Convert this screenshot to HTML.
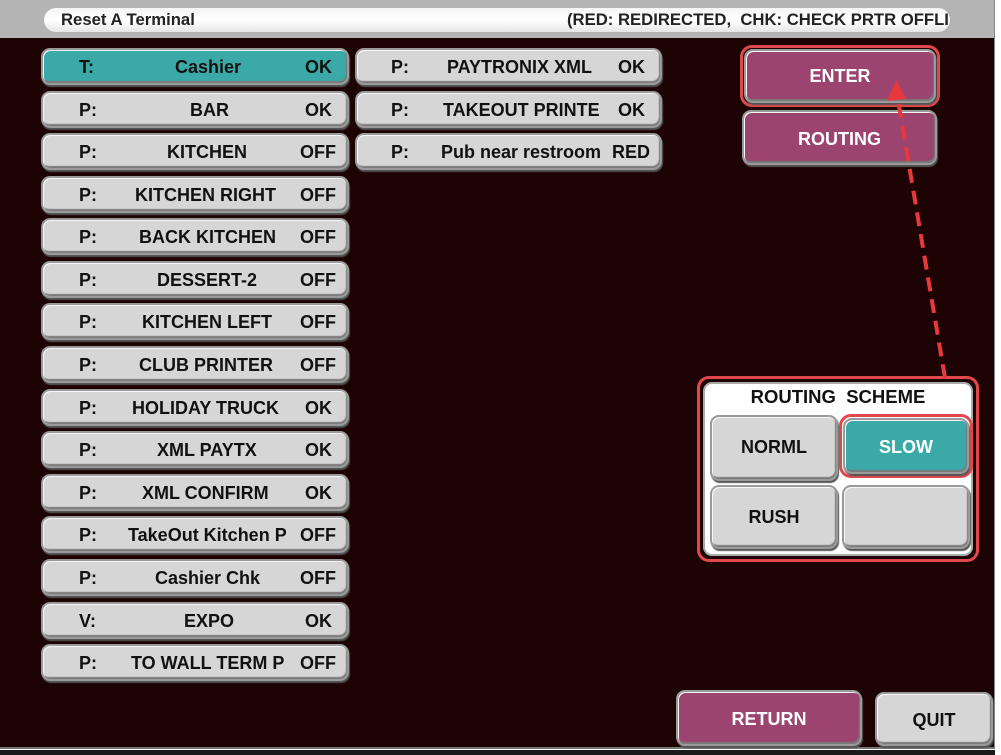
<!DOCTYPE html>
<html><head><meta charset="utf-8"><style>
*{margin:0;padding:0;box-sizing:border-box}
body{width:1001px;height:755px;background:#fff;position:relative;overflow:hidden;font-family:"Liberation Sans",Arial,sans-serif;font-weight:bold}
#main{position:absolute;left:0;top:0;width:995px;height:749px;background:#1e0304;border-right:1px solid #888;border-bottom:2px solid #777}
#bot{position:absolute;left:0;top:750px;width:995px;height:5px;background:#1a1a1a}
#top{position:absolute;left:0;top:0;width:994px;height:38px;background:#b4b4b4}
#pill{position:absolute;left:44px;top:8px;width:906px;height:24px;border-radius:12px;background:linear-gradient(#f4f4f4,#fff 50%,#e6e6e6);font-size:16.7px;color:#222;line-height:24px}
.b{position:absolute;height:37px;border-radius:9px;background:#d6d6d6;border:2px solid #9a9a9a;box-shadow:inset 1px 1px 0 #f6f6f6,inset -1px -2px 1px #7a7a7a,1px 2px 1px #555;font-size:18px;color:#111}
.b span{position:absolute;top:7px;white-space:nowrap}
.t{background:#3aa9a7}
.m{background:#9c4470;color:#fff;text-align:center}
.c{text-align:center}
</style></head><body>
<div id="main"></div><div id="bot"></div>
<div id="top"><div id="pill"><span style="position:absolute;left:17px">Reset A Terminal</span><span style="position:absolute;left:523px">(RED: REDIRECTED,&nbsp; CHK: CHECK PRTR OFFLI</span></div></div>

<div class="b t" style="left:41px;top:48px;width:308px"><span style="left:36px">T:</span><span style="left:132px">Cashier</span><span style="left:262px">OK</span></div>
<div class="b" style="left:41px;top:91px;width:308px"><span style="left:36px">P:</span><span style="left:147px">BAR</span><span style="left:262px">OK</span></div>
<div class="b" style="left:41px;top:133px;width:308px"><span style="left:36px">P:</span><span style="left:124px">KITCHEN</span><span style="left:257px">OFF</span></div>
<div class="b" style="left:41px;top:176px;width:308px"><span style="left:36px">P:</span><span style="left:92px">KITCHEN RIGHT</span><span style="left:257px">OFF</span></div>
<div class="b" style="left:41px;top:218px;width:308px"><span style="left:36px">P:</span><span style="left:96px">BACK KITCHEN</span><span style="left:257px">OFF</span></div>
<div class="b" style="left:41px;top:261px;width:308px"><span style="left:36px">P:</span><span style="left:114px">DESSERT-2</span><span style="left:257px">OFF</span></div>
<div class="b" style="left:41px;top:303px;width:308px"><span style="left:36px">P:</span><span style="left:99px">KITCHEN LEFT</span><span style="left:257px">OFF</span></div>
<div class="b" style="left:41px;top:346px;width:308px"><span style="left:36px">P:</span><span style="left:96px">CLUB PRINTER</span><span style="left:257px">OFF</span></div>
<div class="b" style="left:41px;top:389px;width:308px"><span style="left:36px">P:</span><span style="left:89px">HOLIDAY TRUCK</span><span style="left:262px">OK</span></div>
<div class="b" style="left:41px;top:431px;width:308px"><span style="left:36px">P:</span><span style="left:114px">XML PAYTX</span><span style="left:262px">OK</span></div>
<div class="b" style="left:41px;top:474px;width:308px"><span style="left:36px">P:</span><span style="left:99px">XML CONFIRM</span><span style="left:262px">OK</span></div>
<div class="b" style="left:41px;top:516px;width:308px"><span style="left:36px">P:</span><span style="left:85px">TakeOut Kitchen P</span><span style="left:257px">OFF</span></div>
<div class="b" style="left:41px;top:559px;width:308px"><span style="left:36px">P:</span><span style="left:112px">Cashier Chk</span><span style="left:257px">OFF</span></div>
<div class="b" style="left:41px;top:602px;width:308px"><span style="left:36px">V:</span><span style="left:141px">EXPO</span><span style="left:262px">OK</span></div>
<div class="b" style="left:41px;top:644px;width:308px"><span style="left:36px">P:</span><span style="left:88px">TO WALL TERM P</span><span style="left:257px">OFF</span></div>

<div class="b" style="left:355px;top:48px;width:307px"><span style="left:34px">P:</span><span style="left:90px">PAYTRONIX XML</span><span style="left:261px">OK</span></div>
<div class="b" style="left:355px;top:91px;width:307px"><span style="left:34px">P:</span><span style="left:86px">TAKEOUT PRINTE</span><span style="left:261px">OK</span></div>
<div class="b" style="left:355px;top:133px;width:307px"><span style="left:34px">P:</span><span style="left:84px">Pub near restroom</span><span style="left:255px">RED</span></div>

<div style="position:absolute;left:740px;top:45px;width:200px;height:62px;border:3px solid #e0484c;border-radius:12px"></div>
<div class="b m" style="left:744px;top:49px;width:192px;height:54px"><span style="left:0;right:0;top:15px">ENTER</span></div>
<div class="b m" style="left:742px;top:110px;width:195px;height:55px"><span style="left:0;right:0;top:17px">ROUTING</span></div>

<div style="position:absolute;left:697px;top:376px;width:282px;height:186px;border:3px solid #e0484c;border-radius:12px;background:#1e0304"></div>
<div style="position:absolute;left:703px;top:382px;width:270px;height:174px;border-radius:9px;background:#fff;border:2px solid #aaa"></div>
<div style="position:absolute;left:703px;top:386px;width:270px;text-align:center;font-size:18.5px;color:#111">ROUTING&nbsp; SCHEME</div>
<div class="b c" style="left:710px;top:415px;width:128px;height:66px"><span style="left:0;right:0;top:20px">NORML</span></div>
<div class="b c" style="left:710px;top:485px;width:128px;height:64px"><span style="left:0;right:0;top:20px">RUSH</span></div>
<div class="b c" style="left:842px;top:485px;width:128px;height:64px"></div>
<div style="position:absolute;left:839px;top:414px;width:134px;height:64px;border:3px solid #e0484c;border-radius:12px"></div>
<div class="b t c" style="left:843px;top:418px;width:126px;height:56px;color:#fff"><span style="left:0;right:0;top:17px">SLOW</span></div>

<div class="b m" style="left:676px;top:690px;width:186px;height:56px"><span style="left:0;right:0;top:17px">RETURN</span></div>
<div class="b c" style="left:875px;top:692px;width:118px;height:54px"><span style="left:0;right:0;top:16px">QUIT</span></div>

<svg style="position:absolute;left:0;top:0" width="1001" height="755">
<line x1="945" y1="378" x2="898" y2="100" stroke="#e8383c" stroke-width="4" stroke-dasharray="14,8"/>
<polygon points="896,80 887,101 906,99" fill="#e8383c"/>
</svg>
</body></html>
